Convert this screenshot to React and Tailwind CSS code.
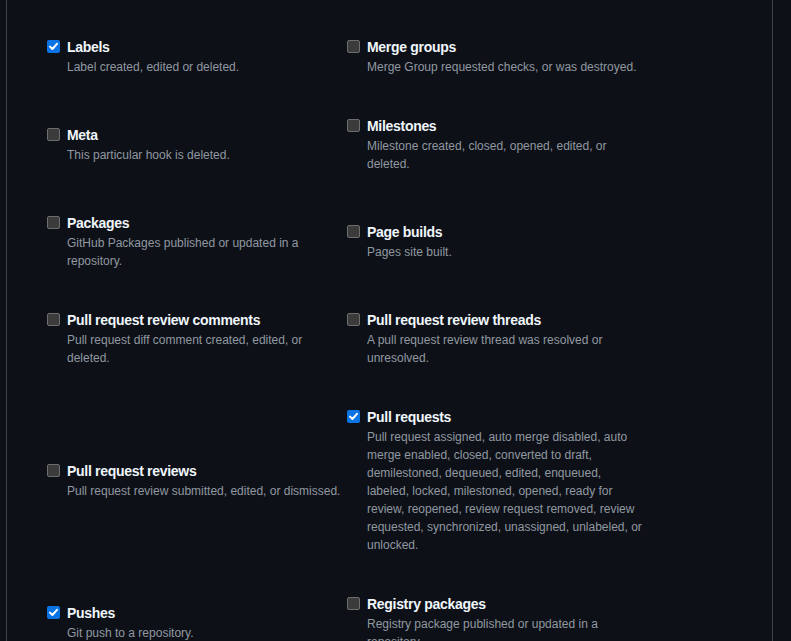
import React from 'react';

// --- Webhook event list (two columns, rows centred) ---
const events = [
    { name: 'Labels', note: 'Label created, edited or deleted.', checked: true },
    { name: 'Merge groups', note: 'Merge Group requested checks, or was destroyed.' },
    { name: 'Meta', note: 'This particular hook is deleted.' },
    { name: 'Milestones', note: 'Milestone created, closed, opened, edited, or deleted.' },
    { name: 'Packages', note: 'GitHub Packages published or updated in a repository.' },
    { name: 'Page builds', note: 'Pages site built.' },
    { name: 'Pull request review comments', note: 'Pull request diff comment created, edited, or deleted.' },
    { name: 'Pull request review threads', note: 'A pull request review thread was resolved or unresolved.' },
    { name: 'Pull request reviews', note: 'Pull request review submitted, edited, or dismissed.' },
    {
        name: 'Pull requests',
        note: 'Pull request assigned, auto merge disabled, auto merge enabled, closed, converted to draft, demilestoned, dequeued, edited, enqueued, labeled, locked, milestoned, opened, ready for review, reopened, review request removed, review requested, synchronized, unassigned, unlabeled, or unlocked.',
        checked: true,
    },
    { name: 'Pushes', note: 'Git push to a repository.', checked: true },
    { name: 'Registry packages', note: 'Registry package published or updated in a repository.' },
];

function Checkbox({ checked }) {
    if (checked) {
        return (
            <span className="mt-[3px] mr-[7px] flex h-[13px] w-[13px] shrink-0 items-center justify-center rounded-[2px] bg-[#0b74e5]">
                <svg width="11" height="11" viewBox="0 0 11 11" fill="none">
                    <path d="M2 5.6 L4.4 8 L9 2.8" stroke="#ffffff" strokeWidth="2" strokeLinecap="round" strokeLinejoin="round" />
                </svg>
            </span>
        );
    }
    return <span className="mt-[3px] mr-[7px] h-[13px] w-[13px] shrink-0 rounded-[2px] border border-[#6e6e6e] bg-[#3b3b3b]"></span>;
}

function EventItem({ name, note, checked }) {
    return (
        <div className="flex">
            <Checkbox checked={checked} />
            <div className="w-[277px]">
                <div className="text-[14px] leading-[21px] font-bold tracking-[-0.3px] text-[#f0f6fc]">{name}</div>
                <div className="text-[12px] leading-[18px] text-[#9198a1]">{note}</div>
            </div>
        </div>
    );
}

export default function App() {
    return (
        <div className="h-[641px] overflow-hidden bg-[#0d1117]" style={{ fontFamily: '"Liberation Sans", Arial, sans-serif' }}>
            <div className="ml-[6px] h-full w-[767px] border-x border-[#3d444d] pl-[40px] pt-[37px]">
                <div className="grid grid-cols-[300px_300px] items-center gap-y-10">
                    {events.map((ev) => (
                        <EventItem key={ev.name} {...ev} />
                    ))}
                </div>
            </div>
        </div>
    );
}
